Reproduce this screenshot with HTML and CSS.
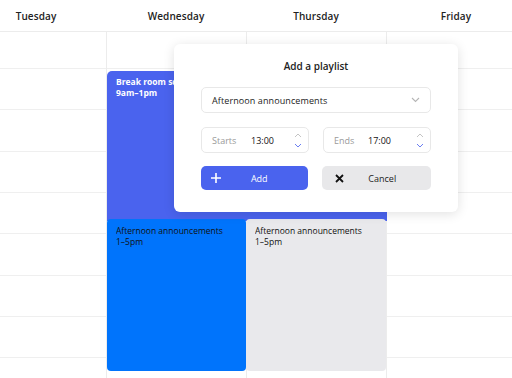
FILE: index.html
```html
<!DOCTYPE html>
<html lang="en">
<head>
  <meta charset="UTF-8" />
  <meta name="viewport" content="width=device-width, initial-scale=1.0"/>
  <title>Schedule</title>
  <link rel="stylesheet" href="styles.css">
</head>
<body>

<div class="calendar">
  <div class="head">
    <div class="day">Tuesday</div>
    <div class="day">Wednesday</div>
    <div class="day">Thursday</div>
    <div class="day">Friday</div>
  </div>
  <div class="grid">
    <div class="col"><div class="cell first"></div><div class="cell"></div><div class="cell"></div><div class="cell"></div><div class="cell"></div><div class="cell"></div><div class="cell"></div><div class="cell"></div><div class="cell"></div></div>
    <div class="col"><div class="cell first"></div><div class="cell"></div><div class="cell"></div><div class="cell"></div><div class="cell"></div><div class="cell"></div><div class="cell"></div><div class="cell"></div><div class="cell"></div></div>
    <div class="col"><div class="cell first"></div><div class="cell"></div><div class="cell"></div><div class="cell"></div><div class="cell"></div><div class="cell"></div><div class="cell"></div><div class="cell"></div><div class="cell"></div></div>
    <div class="col"><div class="cell first"></div><div class="cell"></div><div class="cell"></div><div class="cell"></div><div class="cell"></div><div class="cell"></div><div class="cell"></div><div class="cell"></div><div class="cell"></div></div>

    <div class="event break">
      <div class="ev-title">Break room schedule</div>
      <div>9am–1pm</div>
    </div>
    <div class="event afternoon">
      <div class="ev-title">Afternoon announcements</div>
      <div>1–5pm</div>
    </div>
    <div class="event afternoon grey">
      <div class="ev-title">Afternoon announcements</div>
      <div>1–5pm</div>
    </div>
  </div>
</div>

<div class="modal">
  <h3>Add a playlist</h3>
  <div class="select">
    <span>Afternoon announcements</span>
    <svg width="9" height="6" viewBox="0 0 9 6"><path d="M1 1l3.5 3.5L8 1" fill="none" stroke="#b5b5b5" stroke-width="1.1"/></svg>
  </div>
  <div class="row">
    <div class="time">
      <span class="lbl">Starts</span>
      <span class="val">13:00</span>
      <div class="spin">
        <svg width="8" height="5" viewBox="0 0 8 5"><path d="M1 4l3-3 3 3" fill="none" stroke="#c4c4c4" stroke-width="1"/></svg>
        <svg width="8" height="5" viewBox="0 0 8 5"><path d="M1 1l3 3 3-3" fill="none" stroke="#6a7ef2" stroke-width="1"/></svg>
      </div>
    </div>
    <div class="time">
      <span class="lbl">Ends</span>
      <span class="val">17:00</span>
      <div class="spin">
        <svg width="8" height="5" viewBox="0 0 8 5"><path d="M1 4l3-3 3 3" fill="none" stroke="#c4c4c4" stroke-width="1"/></svg>
        <svg width="8" height="5" viewBox="0 0 8 5"><path d="M1 1l3 3 3-3" fill="none" stroke="#6a7ef2" stroke-width="1"/></svg>
      </div>
    </div>
  </div>
  <div class="row">
    <button class="btn add">
      <svg width="10" height="10" viewBox="0 0 10 10"><path d="M5 0v10M0 5h10" stroke="#fff" stroke-width="1.6"/></svg>
      <span>Add</span>
    </button>
    <button class="btn cancel">
      <svg width="9" height="9" viewBox="0 0 9 9"><path d="M1 1l7 7M8 1l-7 7" stroke="#111" stroke-width="1.8"/></svg>
      <span>Cancel</span>
    </button>
  </div>
</div>

</body>
</html>
```

FILE: styles.css
```css
body {
  margin: 0;
  width: 512px;
  height: 378px;
  overflow: hidden;
  position: relative;
  background: #fff;
  font-family: "Open Sans", Arial, sans-serif;
  color: #1b1b1b;
}

.calendar { margin-left: -34px; width: 560px; height: 378px; overflow: hidden; }

.head {
  display: grid;
  grid-template-columns: repeat(4, 140px);
  height: 31px;
  border-bottom: 1px solid #ececec;
}
.day {
  display: flex; align-items: center; justify-content: center;
  font-size: 10px; font-weight: 600; color: #222;
  letter-spacing: 0.1px;
}

.grid {
  position: relative;
  display: grid;
  grid-template-columns: repeat(4, 140px);
}
.col { border-left: 1px solid #ececec; }
.col:first-child { border-left: none; }
.cell { height: 41.33px; border-bottom: 1px solid #efefef; box-sizing: border-box; }
.cell.first { height: 37px; }

.event {
  position: absolute;
  box-sizing: border-box;
  padding: 5px 9px;
  font-size: 8.5px;
  line-height: 11px;
  border-radius: 4px;
}
.ev-title { white-space: nowrap; overflow: hidden; }
.break {
  left: 141px; top: 39px; width: 280px; height: 150px;
  background: #4a63ee; color: #fff; font-weight: 700;
  border-radius: 5px 5px 0 0;
}
.afternoon {
  left: 141px; top: 187px; width: 139px; height: 152px;
  background: #0074fc; color: #111;
  padding-top: 6px;
}
.afternoon.grey { left: 280px; width: 140px; background: #e9e9ec; }

.modal {
  position: absolute;
  left: 174px; top: 44px;
  width: 284px; height: 168px;
  box-sizing: border-box;
  padding: 15px 27px 0;
  background: #fff;
  border-radius: 6px;
  box-shadow: 0 2px 12px rgba(0, 0, 0, 0.12);
  display: flex; flex-direction: column; gap: 14px;
}
.modal h3 {
  margin: 0;
  text-align: center;
  font-size: 10px; font-weight: 600; color: #222;
  line-height: 14px;
}

.select {
  height: 26px;
  border: 1px solid #e8e8e8; border-radius: 5px;
  box-sizing: border-box;
  display: flex; align-items: center; justify-content: space-between;
  padding: 0 10px 0 10px;
  font-size: 9px; color: #222;
  letter-spacing: 0.1px;
}

.row { display: flex; gap: 14px; }
.row:last-child { margin-top: -1px; }
.time {
  flex: 1;
  height: 26px;
  border: 1px solid #e8e8e8; border-radius: 5px;
  box-sizing: border-box;
  display: flex; align-items: center;
  padding: 0 6px 0 10px;
  font-size: 9px;
}
.lbl { color: #9a9a9a; width: 39px; }
.val { color: #111; font-weight: 500; flex: 1; }
.time:last-child .lbl { width: 34px; }
.spin { display: flex; flex-direction: column; gap: 5px; }
.spin svg { display: block; }

.btn {
  flex: 1;
  height: 24px;
  border: none; border-radius: 5px;
  display: flex; align-items: center;
  padding: 0 10px;
  font-family: inherit; font-size: 9px;
}
.btn span { flex: 1; text-align: center; }
.add { background: #4a63ee; color: #fff; }
.cancel { background: #e8e8ea; color: #222; padding-left: 13px; }
```
